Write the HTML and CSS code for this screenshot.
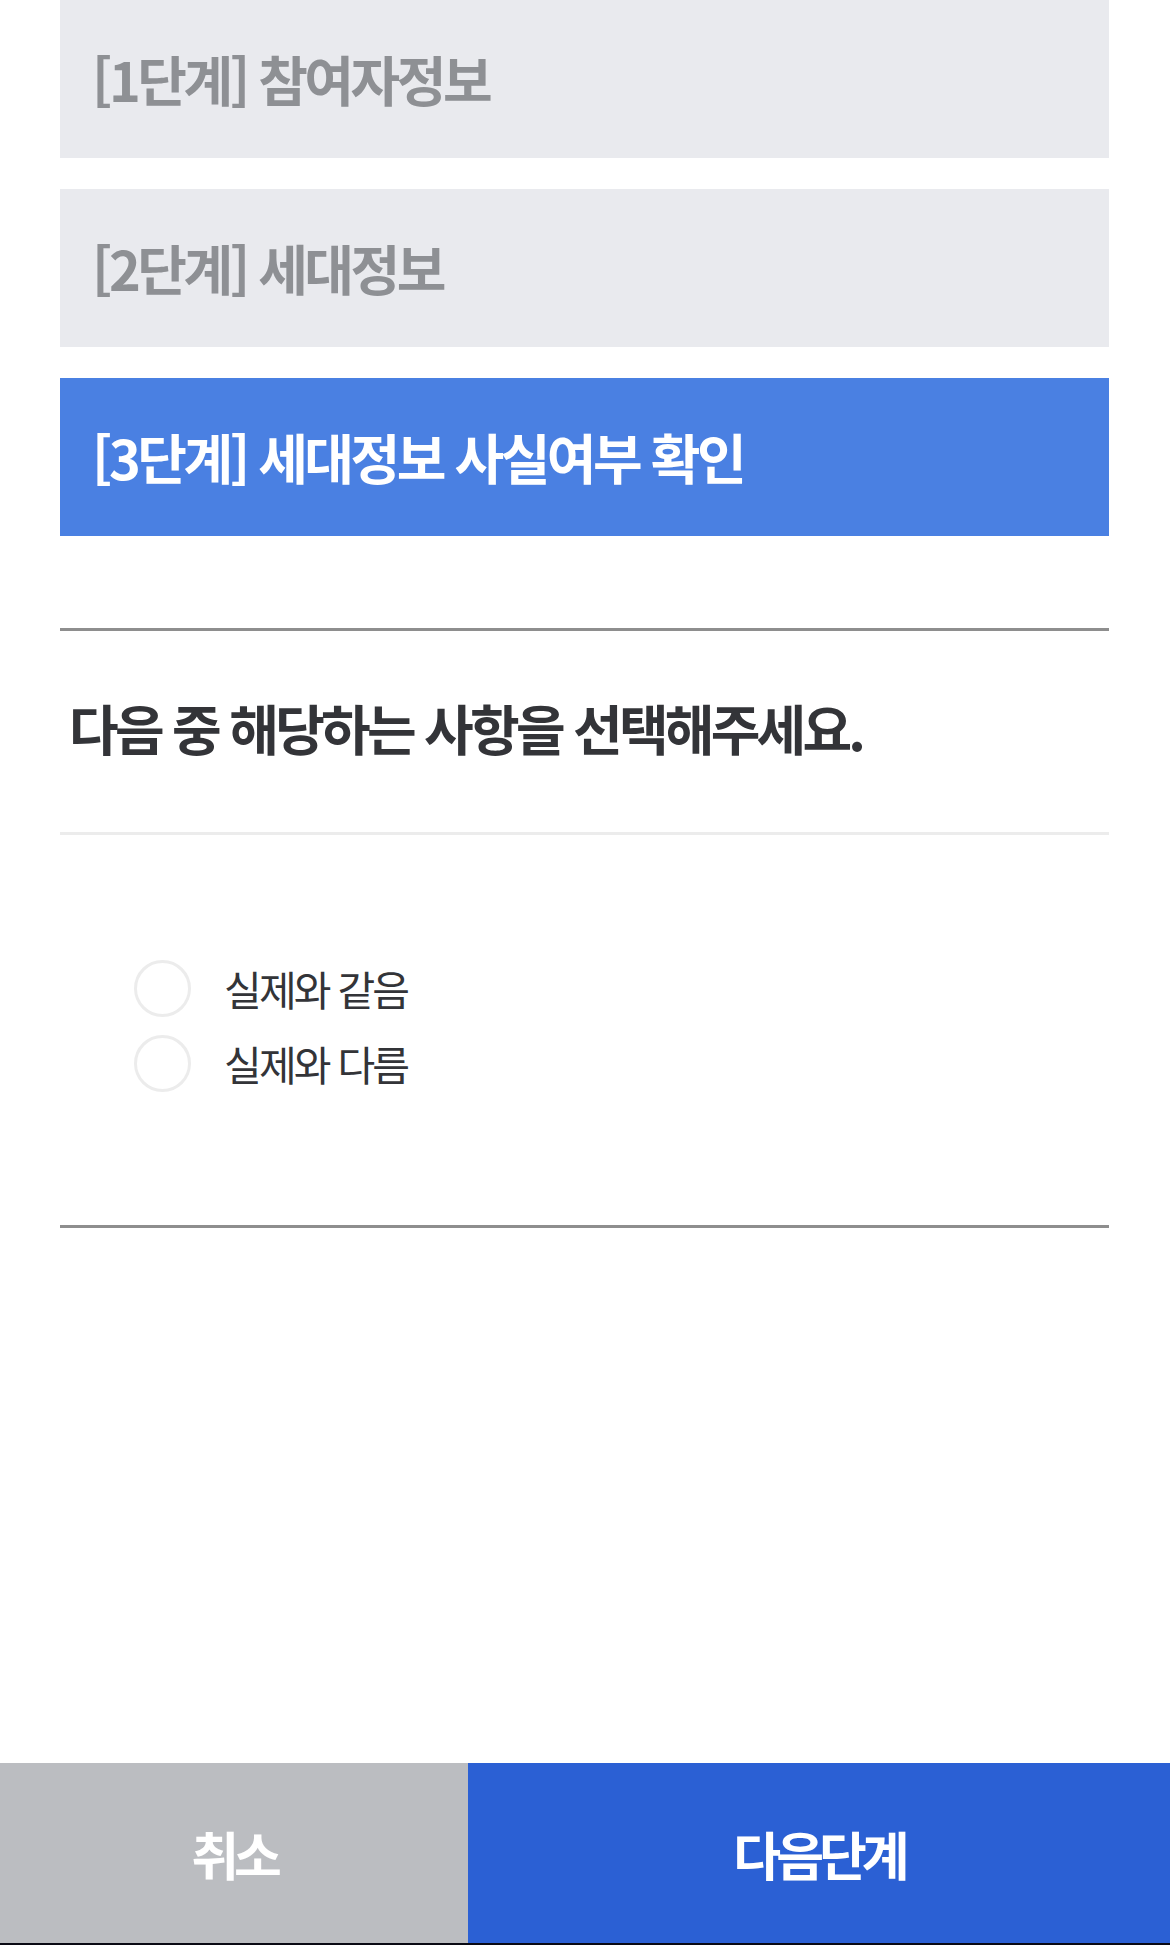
FILE: index.html
```html
<!DOCTYPE html>
<html lang="ko">
<head>
<meta charset="utf-8">
<title>세대정보 사실여부 확인</title>
<link rel="stylesheet" href="styles.css">
</head>
<body>
<div class="page">
  <main class="content">
    <ul class="steps">
      <li class="step">[1단계] 참여자정보</li>
      <li class="step">[2단계] 세대정보</li>
      <li class="step step-active">[3단계] 세대정보 사실여부 확인</li>
    </ul>
    <section class="question">
      <h2 class="question-title">다음 중 해당하는 사항을 선택해주세요.</h2>
      <div class="options">
        <label class="option"><span class="radio"></span><span class="option-text">실제와 같음</span></label>
        <label class="option"><span class="radio"></span><span class="option-text">실제와 다름</span></label>
      </div>
    </section>
  </main>
  <footer class="actions">
    <button class="btn btn-cancel">취소</button>
    <button class="btn btn-next">다음단계</button>
  </footer>
  <div class="navbar"></div>
</div>
</body>
</html>
```
FILE: styles.css
```css
* { box-sizing: border-box; }
html, body { margin: 0; padding: 0; background: #fff; }
body {
  font-family: "Noto Sans CJK KR", "Noto Sans", sans-serif;
  color: #333438;
}
.page {
  min-height: 1945px;
  display: flex;
  flex-direction: column;
}
.content {
  padding: 0 61px 0 60px;
  flex: 1;
}
.steps {
  list-style: none;
  margin: 0;
  padding: 0;
  display: flex;
  flex-direction: column;
  gap: 31px;
}
.step {
  height: 158px;
  display: flex;
  align-items: center;
  padding-left: 32px;
  background: #e9eaee;
  color: #8e9094;
  font-size: 54px;
  font-weight: 700;
  letter-spacing: -3.5px;
  line-height: 1;
}
.step-active {
  background: #4a80e2;
  color: #fff;
}
.question {
  margin-top: 92px;
  border-top: 3px solid #8e8e8e;
  border-bottom: 3px solid #8e8e8e;
}
.question-title {
  margin: 0;
  height: 204px;
  display: flex;
  align-items: center;
  padding-left: 9px;
  padding-bottom: 8px;
  font-size: 54px;
  font-weight: 700;
  letter-spacing: -3.8px;
  color: #333438;
  border-bottom: 3px solid #ececec;
}
.options {
  padding: 116px 0 124px 74px;
  display: flex;
  flex-direction: column;
}
.option {
  height: 75px;
  display: flex;
  align-items: center;
  gap: 33px;
}
.radio {
  width: 57px;
  height: 57px;
  border-radius: 50%;
  border: 3px solid #ececec;
  background: #fff;
  flex: none;
}
.option-text {
  font-size: 41px;
  font-weight: 400;
  letter-spacing: -2.8px;
  color: #333438;
  line-height: 1;
}
.actions {
  display: flex;
  height: 180px;
}
.btn {
  border: 0;
  margin: 0;
  padding: 0;
  font-family: "Noto Sans CJK KR", "Noto Sans", sans-serif;
  font-size: 52px;
  font-weight: 700;
  letter-spacing: -5px;
  color: #fff;
  display: flex;
  align-items: center;
  justify-content: center;
}
.btn-cancel {
  width: 468px;
  background: #bbbdc1;
}
.btn-next {
  flex: 1;
  background: #2b60d4;
}
.navbar {
  height: 2px;
  background: #0a0a14;
}
```
